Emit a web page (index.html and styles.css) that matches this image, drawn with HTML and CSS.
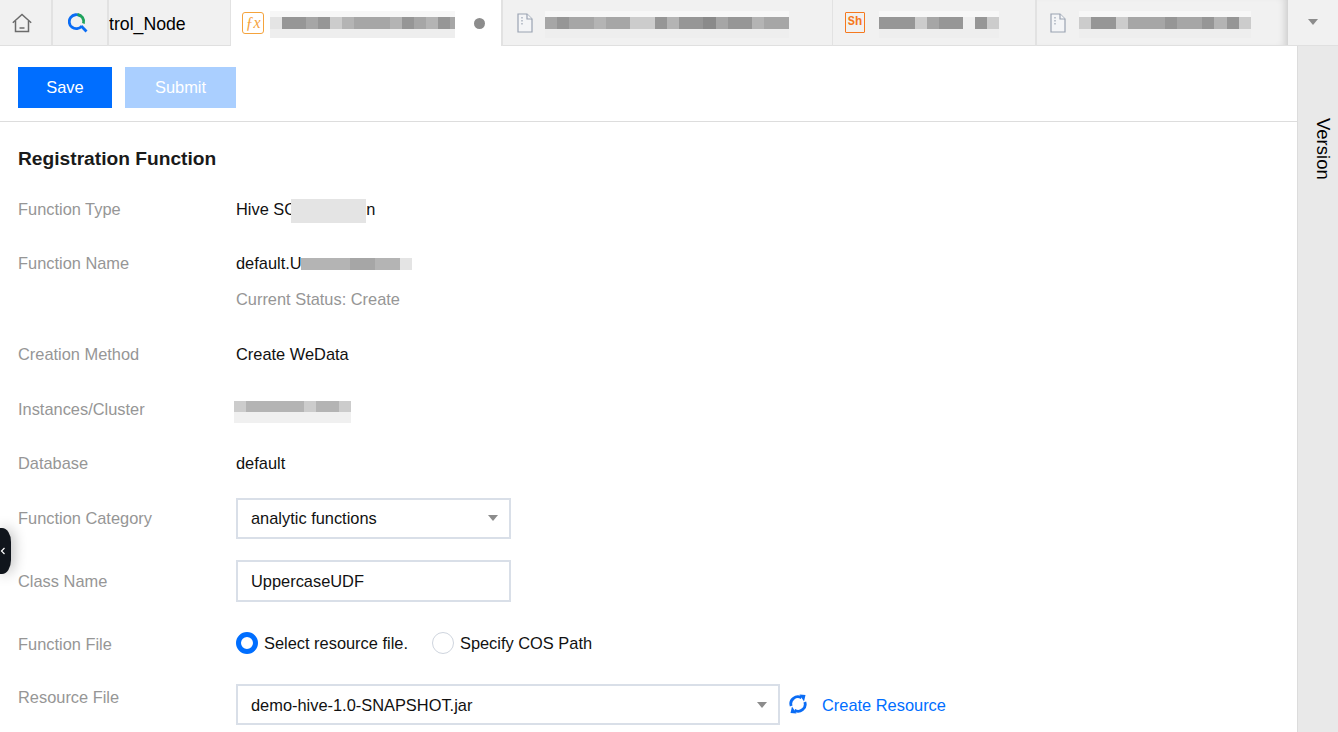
FILE: index.html
```html
<!DOCTYPE html>
<html lang="en">
<head>
<meta charset="utf-8">
<title>Registration Function</title>
<link rel="stylesheet" href="styles.css">
</head>
<body>
<header class="tabbar">
  <div class="tab tab-home">
    <svg class="ic-home" viewBox="0 0 20 20" width="20" height="20" fill="none" stroke="#6b6b6b" stroke-width="1.500"><path d="M.8 9.800 10 1.500l9.200 8.300"/><path d="M3.500 8v10.500h13V8"/><path d="M7.500 15h5"/></svg>
  </div>
  <div class="tab tab-search">
    <svg viewBox="0 0 20 20" width="20" height="20" fill="none" stroke-width="2.800"><path d="M12.600 3.200A7 7 0 1 0 13.800 13" stroke="#0a6cf5"/><path d="M9.500 1.500A7 7 0 0 1 15.400 10.500" stroke="#1fa35c"/><path d="M13.200 13 18.500 18.500" stroke="#0a6cf5"/></svg>
  </div>
  <div class="tab tab-node"><span>trol_Node</span></div>
  <div class="tab tab-active">
    <span class="badge-fx">ƒx</span>
    <span class="mosaic mosaic-a"><i class="s0"></i><i class="s4"></i><i class="s4"></i><i class="s3"></i><i class="s4"></i><i class="s1"></i><i class="s2"></i><i class="s3"></i><i class="s3"></i><i class="s3"></i><i class="s2"></i><i class="s4"></i><i class="s3"></i><i class="s2"></i><i class="s4"></i><i class="half s3"></i></span>
    <span class="dot"></span>
  </div>
  <div class="tab tab-file-a">
    <svg class="ic-file" viewBox="0 0 16 20" width="16" height="20" fill="#f4f5f7" stroke="#9aa3b2" stroke-width="1.200"><path d="M1 1h9l5 5v13H1z"/><path d="M10 1v5h5"/><path d="M5 4v9" stroke-dasharray="1.500 1.500"/></svg>
    <span class="mosaic mosaic-b"><i class="s3"></i><i class="s4"></i><i class="s3"></i><i class="s3"></i><i class="s2"></i><i class="s3"></i><i class="s3"></i><i class="s1"></i><i class="s1"></i><i class="s4"></i><i class="s2"></i><i class="s4"></i><i class="s4"></i><i class="s5"></i><i class="s3"></i><i class="s4"></i><i class="s4"></i><i class="s2"></i><i class="s3"></i><i class="s3"></i></span>
  </div>
  <div class="tab tab-sh">
    <span class="badge-sh">Sh</span>
    <span class="mosaic mosaic-c"><i class="s4"></i><i class="s4"></i><i class="s4"></i><i class="s1"></i><i class="s3"></i><i class="s4"></i><i class="s4"></i><i class="s6"></i><i class="s4"></i><i class="s1"></i></span>
  </div>
  <div class="tab tab-file-b">
    <svg class="ic-file" viewBox="0 0 16 20" width="16" height="20" fill="#f4f5f7" stroke="#9aa3b2" stroke-width="1.200"><path d="M1 1h9l5 5v13H1z"/><path d="M10 1v5h5"/><path d="M5 4v9" stroke-dasharray="1.500 1.500"/></svg>
    <span class="mosaic mosaic-d"><i class="s1"></i><i class="s4"></i><i class="s4"></i><i class="s1"></i><i class="s3"></i><i class="s3"></i><i class="s3"></i><i class="s4"></i><i class="s3"></i><i class="s3"></i><i class="s4"></i><i class="s2"></i><i class="s4"></i><i class="s1"></i></span>
  </div>
  <div class="tab-more"><span class="caret caret-more"></span></div>
</header>

<div class="workspace">
  <main class="content">
    <div class="toolbar">
      <button class="btn btn-primary" type="button">Save</button>
      <button class="btn btn-disabled" type="button">Submit</button>
    </div>
    <section class="form">
      <h2 class="form-title">Registration Function</h2>
      <div class="row row-type">
        <div class="label">Function Type</div>
        <div class="value">Hive SC<span class="mosaic mosaic-e"><i class="s0"></i><i class="s0"></i><i class="s0"></i><i class="s0"></i><i class="s0"></i><i class="s0"></i></span><span class="tail">n</span></div>
      </div>
      <div class="row row-name">
        <div class="label">Function Name</div>
        <div class="value-stack">
          <div class="value">default.U<span class="mosaic mosaic-f"><i class="s2"></i><i class="s2"></i><i class="s2"></i><i class="s2"></i><i class="s3"></i><i class="s3"></i><i class="s2"></i><i class="s2"></i><i class="s0"></i></span></div>
          <div class="hint">Current Status: Create</div>
        </div>
      </div>
      <div class="row row-method">
        <div class="label">Creation Method</div>
        <div class="value">Create WeData</div>
      </div>
      <div class="row row-cluster">
        <div class="label">Instances/Cluster</div>
        <div class="value"><span class="mosaic mosaic-g"><i class="s1"></i><i class="s2"></i><i class="s2"></i><i class="s2"></i><i class="s2"></i><i class="s2"></i><i class="s1"></i><i class="s2"></i><i class="s2"></i><i class="s1"></i></span></div>
      </div>
      <div class="row row-db">
        <div class="label">Database</div>
        <div class="value">default</div>
      </div>
      <div class="row row-cat">
        <div class="label label-cat">Function Category</div>
        <div class="field field-select field-short"><span>analytic functions</span><span class="caret"></span></div>
      </div>
      <div class="row row-class">
        <div class="label">Class Name</div>
        <div class="field field-short"><span>UppercaseUDF</span></div>
      </div>
      <div class="row row-file">
        <div class="label label-file">Function File</div>
        <div class="radios">
          <label class="radio"><span class="radio-mark radio-on"></span>Select resource file.</label>
          <label class="radio"><span class="radio-mark"></span>Specify COS Path</label>
        </div>
      </div>
      <div class="row row-res">
        <div class="label label-top">Resource File</div>
        <div class="field field-select field-long"><span>demo-hive-1.0-SNAPSHOT.jar</span><span class="caret"></span></div>
        <svg class="ic-refresh" viewBox="0 0 20 20" width="20" height="20" fill="none" stroke="#0a6cf5" stroke-width="2.800"><path d="M3.200 12A7 7 0 0 1 13.500 3.800"/><path d="M16.800 8A7 7 0 0 1 6.500 16.200"/><path d="M11.500 .5 17.500 1 16 7.500z" fill="#0a6cf5" stroke="none"/><path d="M8.500 19.500 2.500 19 4 12.500z" fill="#0a6cf5" stroke="none"/></svg>
        <a class="link" href="#">Create Resource</a>
      </div>
    </section>
  </main>
  <aside class="side"><span class="side-label">Version</span></aside>
</div>
<div class="collapse"><svg viewBox="0 0 6 10" width="6" height="10" fill="none" stroke="#fff" stroke-width="1.200"><path d="M4.500 2 1.500 5l3 3"/></svg></div>
</body>
</html>
```
FILE: styles.css
```css
* { box-sizing: border-box; }
html, body { margin: 0; height: 100%; overflow: hidden; background: #fff; }
body { font-family: "Liberation Sans", Arial, sans-serif; font-size: 16.4px; line-height: 20px; color: #000; display: flex; flex-direction: column; }

.tabbar { display: flex; flex: none; height: 46px; background: #f1f1f1; border-bottom: 1px solid #e0e0e0; }
.tab { display: flex; align-items: center; flex: none; height: 46px; border-right: 2px solid #e2e2e2; border-bottom: 1px solid #e0e0e0; overflow: hidden; }
.tab-home { width: 53px; padding-left: 12px; }
.tab-search { width: 56px; padding-left: 15px; }
.tab-node { width: 122px; font-size: 17.700px; padding-top: 3px; border-right: 1px solid #e2e2e2; }
.tab-active { width: 272px; padding-left: 11px; background: #fff; border-bottom: 0; }
.tab-file-a { width: 330px; padding-left: 14px; border-right: 1px solid #e2e2e2; }
.tab-sh { width: 204px; padding-left: 12px; }
.tab-file-b { flex: 1; min-width: 0; padding-left: 13px; border-right: 0; box-shadow: inset -8px 0 8px -6px rgba(0,0,0,.18); }
.tab-more { flex: none; width: 50px; height: 45px; display: flex; align-items: center; justify-content: center; padding-bottom: 2px; }

.badge-fx { flex: none; width: 22px; height: 22px; border: 1.500px solid #f5a33c; border-radius: 3px; color: #f5a33c; font: italic 16px/19px "Liberation Serif", serif; text-align: center; }
.badge-sh { flex: none; width: 20px; height: 21px; border: 1.500px solid #f5791f; border-radius: 1px; color: #f5791f; font: bold 12px/18px "Liberation Mono", monospace; text-align: center; }
.ic-file { flex: none; }

.mosaic { display: inline-flex; height: 12px; vertical-align: middle; flex: none; box-shadow: 0 -6px 0 #f7f7f7, 0 9px 0 #eeeeee; }
.mosaic i { display: block; flex: none; width: 12px; height: 100%; }
.mosaic i.half { width: 5px; }
.s0 { background: #e4e4e4; }
.s1 { background: #cccccc; }
.s2 { background: #b4b4b4; }
.s3 { background: #a6a6a6; }
.s4 { background: #969696; }
.s5 { background: #8a8a8a; }
.s6 { background: #efefef; }
.mosaic-a { margin-left: 6px; }
.mosaic-b { margin-left: 12px; }
.mosaic-b i { width: 12.200px; }
.mosaic-c { margin-left: 14px; }
.mosaic-d { margin-left: 13px; }
.mosaic-d i { width: 12.300px; }
.mosaic-e { height: 24px; margin: -4px 0 -4px -5px; box-shadow: none; }
.mosaic-e i { width: 12.500px; }
.mosaic-f { margin: -2px 0 0 -1px; box-shadow: none; }
.mosaic-f i { width: 12.400px; }
.mosaic-g { height: 11px; margin-left: -2px; vertical-align: 3px; box-shadow: 0 11px 0 #f0f0f0; }
.mosaic-g i { width: 11.700px; }

.dot { flex: none; width: 11px; height: 11px; border-radius: 50%; background: #8c8c8c; margin-left: 19px; }
.caret { flex: none; width: 0; height: 0; border-left: 5.500px solid transparent; border-right: 5.500px solid transparent; border-top: 6.500px solid #8c8c8c; }
.caret-more { border-left-width: 5px; border-right-width: 5px; }

.workspace { flex: 1; min-height: 0; display: flex; }
.content { flex: 1; min-width: 0; }
.side { flex: none; width: 41px; background: #e9e9e9; border-left: 1px solid #dcdcdc; padding-top: 72px; padding-left: 13px; }
.side-label { display: block; writing-mode: vertical-rl; font-size: 18.500px; line-height: 24px; }

.toolbar { display: flex; gap: 13px; height: 76px; padding: 21px 18px 0; border-bottom: 1px solid #ddd; }
.btn { height: 41px; border: 0; font: inherit; color: #fff; padding: 0 0 2px; }
.btn-primary { width: 94px; background: #006eff; }
.btn-disabled { width: 111px; background: #aacfff; }

.form { padding-left: 18px; }
.form-title { margin: 0; padding-top: 26px; font-size: 19.200px; line-height: 22px; font-weight: bold; color: #1a1a1a; height: 77px; }
.row { display: flex; align-items: flex-start; }
.label { flex: none; width: 218px; color: #969696; }
.label-cat { padding-bottom: 2px; }
.label-file { padding-top: 2px; }
.value { color: #111; white-space: nowrap; }
.hint { margin-top: 16px; color: #969696; }
.row-type { margin-bottom: 34px; }
.row-name { margin-bottom: 35px; }
.row-method { margin-bottom: 35px; }
.row-cluster { margin-bottom: 34px; }
.row-db { margin-bottom: 25px; }
.row-cat { margin-bottom: 21px; align-items: center; }
.row-class { margin-bottom: 30px; align-items: center; }
.row-file { margin-bottom: 30px; }
.label-top { padding-top: 3px; }

.field { height: 41px; border: 2px solid #d9dfe8; display: flex; align-items: center; justify-content: space-between; padding: 0 11px 0 13px; color: #111; flex: none; }
.field-short { width: 275px; }
.field-select.field-short { padding-bottom: 2px; }
.row-class .field { height: 42px; }
.field-long { width: 544px; padding-top: 1px; }
.radios { display: flex; gap: 24px; }
.radio { display: flex; align-items: center; gap: 6px; color: #111; }
.radio-mark { width: 22px; height: 22px; border-radius: 50%; border: 1px solid #cfd5de; background: #fff; }
.radio-on { border: 5.500px solid #006eff; }
.row-res { align-items: flex-start; }
.ic-refresh { flex: none; margin: 10px 0 0 8px; }
.link { color: #006eff; text-decoration: none; margin: 11px 0 0 14px; }

.collapse { position: absolute; left: 0; top: 528px; width: 11px; height: 46px; background: #10151c; border-radius: 0 9px 9px 0 / 0 14px 14px 0; box-shadow: 2px 0 14px rgba(0,0,0,.3); display: flex; align-items: center; }
```
